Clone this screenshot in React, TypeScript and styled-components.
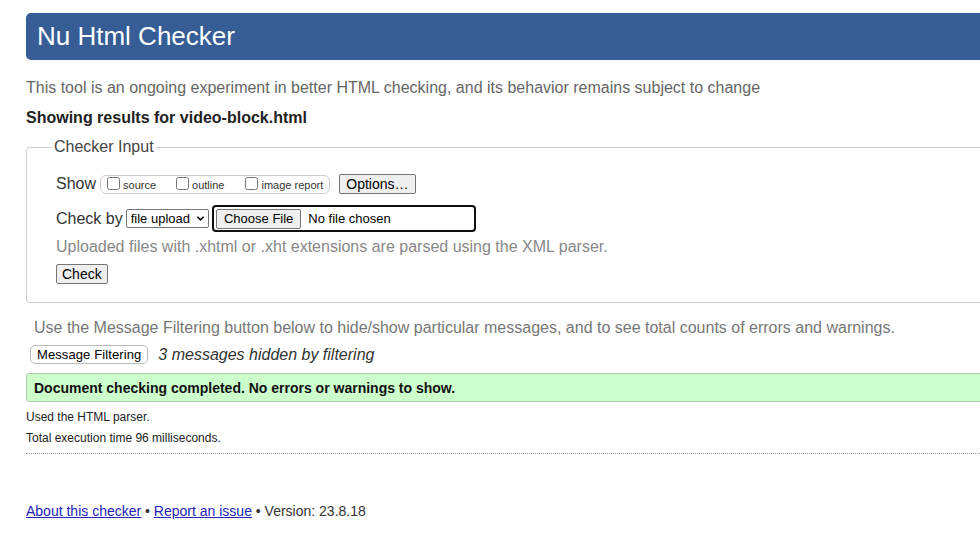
import styled, { createGlobalStyle } from "styled-components";

const GlobalStyle = createGlobalStyle`
  html, body {
    margin: 0;
    padding: 0;
    background: #fff;
    overflow: hidden;
  }
  body {
    font-family: "Liberation Sans", Arial, sans-serif;
    color: #222;
  }
`;

function App(): JSX.Element {
  return (
    <>
      <GlobalStyle />
      <Page>
        <Header>
          <Title>Nu Html Checker</Title>
        </Header>
        <Intro>
          This tool is an ongoing experiment in better HTML checking, and its
          behavior remains subject to change
        </Intro>
        <Results>Showing results for video-block.html</Results>

        <Fieldset>
          <Legend>Checker Input</Legend>
          <Row>
            <RowLabel>Show</RowLabel>
            <CheckGroup>
              <CheckItem $gap={20}>
                <Box type="checkbox" />
                source
              </CheckItem>
              <CheckItem $gap={21}>
                <Box type="checkbox" />
                outline
              </CheckItem>
              <CheckItem $gap={0}>
                <Box type="checkbox" />
                image report
              </CheckItem>
            </CheckGroup>
            <Button $size={14} $ml={9} $px={6}>
              Options…
            </Button>
          </Row>
          <Row $mt={11}>
            <RowLabel>Check by</RowLabel>
            <Select>
              file upload
              <Chevron viewBox="0 0 10 10">
                <path
                  d="M1.5 3 L5 6.5 L8.5 3"
                  fill="none"
                  stroke="#000"
                  strokeWidth="1.8"
                />
              </Chevron>
            </Select>
            <FileBox>
              <Button $size={13}>Choose File</Button>
              <FileText>No file chosen</FileText>
            </FileBox>
          </Row>
          <Hint>
            Uploaded files with .xhtml or .xht extensions are parsed using the
            XML parser.
          </Hint>
          <Button $size={14} $px={5}>
            Check
          </Button>
        </Fieldset>

        <FilterNote>
          Use the Message Filtering button below to hide/show particular
          messages, and to see total counts of errors and warnings.
        </FilterNote>
        <FilterRow>
          <RoundButton>Message Filtering</RoundButton>
          <Hidden>3 messages hidden by filtering</Hidden>
        </FilterRow>

        <Success>
          Document checking completed. No errors or warnings to show.
        </Success>
        <Small $mt={8}>Used the HTML parser.</Small>
        <Small $mt={6}>Total execution time 96 milliseconds.</Small>
        <Dotted />

        <Footer>
          <Link href="#">About this checker</Link> •{" "}
          <Link href="#">Report an issue</Link> • Version: 23.8.18
        </Footer>
      </Page>
    </>
  );
}

export default App;

const Page = styled.div`
  width: 1000px;
  padding: 13px 0 0 26px;
`;

const Header = styled.header`
  height: 47px;
  background: #365d95;
  border-radius: 5px;
  display: flex;
  align-items: center;
  padding-left: 11px;
`;

const Title = styled.h1`
  margin: -2px 0 0;
  font-size: 26px;
  font-weight: normal;
  color: #fff;
  line-height: 1;
`;

const Intro = styled.p`
  margin: 18px 0 0;
  font-size: 16px;
  line-height: 19px;
  color: #666;
`;

const Results = styled.h2`
  margin: 11px 0 0;
  font-size: 16px;
  line-height: 19px;
  font-weight: bold;
  color: #222;
`;

const Fieldset = styled.fieldset`
  margin: 11px 0 0;
  padding: 18px 29px 18px;
  border: 1px solid #ccc;
  border-radius: 4px;
`;

const Legend = styled.legend`
  font-size: 16px;
  color: #444;
  padding: 0 2px;
  margin-left: -4px;
`;

const Row = styled.div<{ $mt?: number }>`
  display: flex;
  align-items: center;
  margin-top: ${({ $mt }) => $mt ?? 0}px;
  font-size: 16px;
  color: #333;
`;

const RowLabel = styled.span`
  margin-right: 3px;
`;

const CheckGroup = styled.div`
  display: flex;
  align-items: center;
  height: 17px;
  margin-left: 1px;
  border: 1px solid #ccc;
  border-radius: 6px;
  padding: 0 6px;
`;

const CheckItem = styled.label<{ $gap: number }>`
  display: flex;
  align-items: center;
  font-size: 11px;
  color: #333;
  margin-right: ${({ $gap }) => $gap}px;
  padding-top: 2px;
`;

const Box = styled.input`
  width: 13px;
  height: 13px;
  margin: 0 3px 3px 0;
`;

const Button = styled.button<{ $size: number; $ml?: number; $px?: number }>`
  font-family: "Liberation Sans", Arial, sans-serif;
  font-size: ${({ $size }) => $size}px;
  color: #000;
  background: #efefef;
  border: 1px solid #767676;
  border-radius: 2px;
  padding: 1px ${({ $px }) => $px ?? 7}px;
  margin-left: ${({ $ml }) => $ml ?? 0}px;
  line-height: 16px;
`;

const Select = styled.div`
  display: flex;
  align-items: center;
  height: 17px;
  border: 1px solid #767676;
  border-radius: 2px;
  padding: 0 3px 0 4px;
  font-size: 13px;
  color: #000;
`;

const Chevron = styled.svg`
  width: 9px;
  height: 9px;
  margin-left: 6px;
`;

const FileBox = styled.div`
  display: flex;
  align-items: center;
  gap: 7px;
  width: 256px;
  height: 23px;
  margin-left: 3px;
  padding: 0 2px;
  border: 2px solid #101010;
  border-radius: 4px;
`;

const FileText = styled.span`
  font-size: 13px;
  color: #000;
`;

const Hint = styled.p`
  margin: 5px 0 8px;
  font-size: 16px;
  line-height: 19px;
  color: #888;
`;

const FilterNote = styled.p`
  margin: 15px 0 0 8px;
  font-size: 16px;
  line-height: 19px;
  color: #777;
`;

const FilterRow = styled.div`
  display: flex;
  align-items: center;
  margin: 8px 0 0 4px;
`;

const RoundButton = styled.button`
  font-family: "Liberation Sans", Arial, sans-serif;
  font-size: 13px;
  color: #000;
  background: #fff;
  border: 1px solid #bbb;
  border-radius: 5px;
  padding: 1px 6px;
  line-height: 15px;
  letter-spacing: 0.1px;
`;

const Hidden = styled.em`
  margin-left: 10px;
  font-size: 16px;
  color: #333;
`;

const Success = styled.div`
  margin-top: 9px;
  height: 27px;
  display: flex;
  align-items: center;
  padding-left: 7px;
  background: #ccffcc;
  border: 1px solid #a9c9a9;
  border-radius: 3px;
  font-size: 14px;
  font-weight: bold;
  color: #111;
`;

const Small = styled.p<{ $mt: number }>`
  margin: ${({ $mt }) => $mt}px 0 0;
  font-size: 12px;
  line-height: 15px;
  color: #222;
`;

const Dotted = styled.hr`
  margin: 7px 0 0;
  border: 0;
  border-top: 1px dotted #999;
`;

const Footer = styled.footer`
  margin-top: 49px;
  font-size: 14px;
  color: #333;
`;

const Link = styled.a`
  color: #2323b8;
  text-decoration: underline;
`;
